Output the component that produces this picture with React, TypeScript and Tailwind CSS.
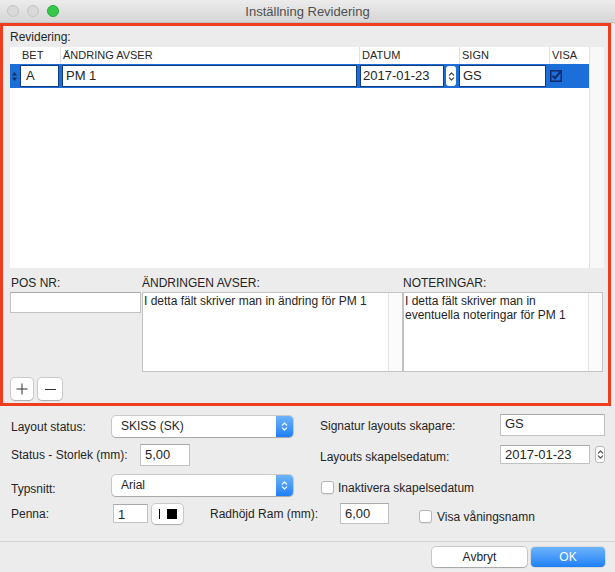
import type { ReactNode } from "react";

function Chevrons({ color, className }: { color: string; className?: string }) {
  return (
    <svg viewBox="0 0 8 14" className={className} fill="none" stroke={color} strokeWidth="1.4" strokeLinecap="round" strokeLinejoin="round">
      <path d="M1.5 5.5L4 3L6.5 5.5" />
      <path d="M1.5 8.5L4 11L6.5 8.5" />
    </svg>
  );
}

function Stepper({ className }: { className: string }) {
  return (
    <div className={`flex items-center justify-center rounded-[3px] border border-[#b9b9b9] bg-white ${className}`}>
      <Chevrons color="#555" className="h-[13px] w-[7px]" />
    </div>
  );
}

function Select({ value }: { value: string }) {
  return (
    <div className="flex h-[21px] w-[181px] overflow-hidden rounded-[4px] bg-white shadow-[0_0_0_1px_rgba(0,0,0,0.14),0_1px_1px_rgba(0,0,0,0.18)]">
      <span className="flex-1 pl-[9px] leading-[21px]">{value}</span>
      <span className="flex w-[17px] items-center justify-center bg-gradient-to-b from-[#6db3fa] to-[#1d7ff6]">
        <Chevrons color="#fff" className="h-[13px] w-[7px]" />
      </span>
    </div>
  );
}

function Field({ value, className }: { value?: string; className: string }) {
  return (
    <div className={`border border-[#c2c2c2] border-t-[#aaaaaa] bg-white pl-[4px] text-[13px] ${className}`}>{value}</div>
  );
}

function Checkbox() {
  return <span className="h-[13px] w-[13px] shrink-0 rounded-[3px] border border-[#b5b5b5] bg-white shadow-[0_1px_0_rgba(0,0,0,0.06)]" />;
}

function SmallButton({ children, w }: { children: ReactNode; w: string }) {
  return (
    <div className={`flex h-[22px] items-center justify-center rounded-[4px] bg-white shadow-[0_0_0_1px_rgba(0,0,0,0.14),0_1px_1px_rgba(0,0,0,0.15)] ${w}`}>
      {children}
    </div>
  );
}

function TitleBar() {
  return (
    <div className="relative flex h-[23px] shrink-0 items-center justify-center border-b border-[#c2c2c2] bg-gradient-to-b from-[#ececec] to-[#d6d6d6]">
      <div className="absolute left-[7px] top-[5px] flex gap-[8px]">
        <span className="h-[12px] w-[12px] rounded-full border border-[#c4c4c4] bg-[#d9d9d9]" />
        <span className="h-[12px] w-[12px] rounded-full border border-[#c4c4c4] bg-[#d9d9d9]" />
        <span className="h-[12px] w-[12px] rounded-full border border-[#27a93a] bg-[#35c94b]" />
      </div>
      <span className="pt-[1px] text-[13px] text-[#4f4f4f]">Inställning Revidering</span>
    </div>
  );
}

function RevisionTable() {
  const head = "border-l border-[#e1e1e1] pl-[2px]";
  return (
    <div className="ml-[7px] mt-[3px] flex w-[594px] flex-col bg-white">
      <div className="flex h-[17px] text-[11px] leading-[17px] text-[#262626]">
        <span className="w-[9px]" />
        <span className="w-[41px] pl-[3px]">BET</span>
        <span className={`w-[299px] ${head}`}>ÄNDRING AVSER</span>
        <span className={`w-[100px] ${head}`}>DATUM</span>
        <span className={`w-[90px] ${head}`}>SIGN</span>
        <span className={`w-[40px] ${head}`}>VISA</span>
        <span className="w-[15px] border-l border-[#e1e1e1] bg-[#f8f8f8]" />
      </div>
      <div className="flex h-[24px] text-[13px]">
        <div className="flex w-[579px] items-center bg-[#1c6ed9]">
          <span className="flex w-[9px] justify-center">
            <svg viewBox="0 0 5 9" className="h-[9px] w-[5px]" fill="#0e2c5e">
              <path d="M2.5 0L5 3.5H0Z" />
              <path d="M2.5 9L5 5.5H0Z" />
            </svg>
          </span>
          <div className="ml-[1px] h-[22px] w-[39px] border border-[#123c80] bg-white pl-[5px] leading-[20px]">A</div>
          <div className="ml-[3px] h-[22px] w-[295px] border border-[#123c80] bg-white pl-[3px] leading-[20px]">PM 1</div>
          <div className="ml-[3px] h-[22px] w-[84px] border border-[#123c80] bg-white pl-[2px] leading-[20px]">2017-01-23</div>
          <div className="ml-[2px] flex h-[20px] w-[10px] items-center justify-center rounded-[3px] bg-white">
            <Chevrons color="#444" className="h-[13px] w-[7px]" />
          </div>
          <div className="ml-[3px] h-[22px] w-[87px] border border-[#123c80] bg-white pl-[3px] leading-[20px]">GS</div>
          <span className="ml-[4px] flex">
            <svg viewBox="0 0 12 12" className="h-[12px] w-[12px]" fill="none" stroke="#0b2a66">
              <rect x="0.75" y="0.75" width="10.5" height="10.5" strokeWidth="1.5" />
              <path d="M2.6 5.8L5 8.3L10.5 1.6" strokeWidth="2" />
            </svg>
          </span>
        </div>
        <span className="w-[15px] border-l border-[#e1e1e1] bg-[#f8f8f8]" />
      </div>
      <div className="flex h-[180px] justify-end">
        <span className="w-[15px] border-l border-[#e1e1e1] bg-[#f8f8f8]" />
      </div>
    </div>
  );
}

function NotesArea({ text, className }: { text: ReactNode; className: string }) {
  return (
    <div className={`flex h-[80px] border border-[#c2c2c2] bg-white ${className}`}>
      <p className="flex-1 pl-[1px] pt-[1px] leading-[14px]">{text}</p>
      <span className="w-[14px] border-l border-[#e4e4e4] bg-[#fbfbfb]" />
    </div>
  );
}

export default function App() {
  return (
    <div className="flex h-[572px] w-[615px] flex-col overflow-hidden bg-[#ececec] font-['Liberation_Sans',Arial,sans-serif] text-[12px] text-[#252525]">
      <TitleBar />

      <section className="flex h-[383px] w-[611px] shrink-0 flex-col border-[3px] border-[#ee3d1f]">
        <div className="ml-[7px] mt-[4px] h-[14px] leading-[14px]">Revidering:</div>
        <RevisionTable />

        <div className="ml-[7px] mt-[8px] flex">
          <div className="flex w-[132px] flex-col">
            <span className="h-[14px] pl-[1px] leading-[14px]">POS NR:</span>
            <Field className="mt-[2px] h-[21px] w-[131px]" />
          </div>
          <div className="flex w-[261px] flex-col">
            <span className="h-[14px] leading-[14px]">ÄNDRINGEN AVSER:</span>
            <NotesArea className="mt-[2px] w-[261px]" text="I detta fält skriver man in ändring för PM 1" />
          </div>
          <div className="flex w-[200px] flex-col">
            <span className="h-[14px] leading-[14px]">NOTERINGAR:</span>
            <NotesArea
              className="mt-[2px] w-[200px]"
              text={
                <>
                  I detta fält skriver man in
                  <br />
                  eventuella noteringar för PM 1
                </>
              }
            />
          </div>
        </div>

        <div className="ml-[8px] mt-[6px] flex gap-[5px]">
          <SmallButton w="w-[22px]">
            <svg viewBox="0 0 12 12" className="h-[12px] w-[12px]" stroke="#333" strokeWidth="1">
              <path d="M6 0.5V11.5M0.5 6H11.5" />
            </svg>
          </SmallButton>
          <SmallButton w="w-[24px]">
            <span className="h-[1px] w-[11px] bg-[#333]" />
          </SmallButton>
        </div>
      </section>

      <div className="flex pl-[11px]">
        <div className="w-[309px] pt-[10px]">
          <div className="flex h-[21px] items-center">
            <span className="w-[101px]">Layout status:</span>
            <Select value="SKISS (SK)" />
          </div>
          <div className="mt-[7px] flex h-[22px] items-center">
            <span className="w-[129px]">Status - Storlek (mm):</span>
            <Field value="5,00" className="h-[22px] w-[50px] leading-[20px]" />
          </div>
          <div className="mt-[9px] flex h-[21px] items-center">
            <span className="w-[101px] pt-[6px]">Typsnitt:</span>
            <Select value="Arial" />
          </div>
        </div>
        <div className="pt-[8px]">
          <div className="flex h-[22px] items-center">
            <span className="w-[180px] pt-[2px]">Signatur layouts skapare:</span>
            <Field value="GS" className="h-[22px] w-[105px] leading-[18px]" />
          </div>
          <div className="mt-[9px] flex h-[19px] items-center">
            <span className="w-[180px] pt-[5px]">Layouts skapelsedatum:</span>
            <Field value="2017-01-23" className="h-[19px] w-[90px] leading-[17px]" />
            <Stepper className="ml-[5px] h-[17px] w-[10px]" />
          </div>
          <div className="ml-[1px] mt-[17px] flex h-[13px] items-center gap-[4px]">
            <Checkbox />
            <span>Inaktivera skapelsedatum</span>
          </div>
        </div>
      </div>

      <div className="mt-[7px] flex h-[21px] items-center pl-[11px]">
        <span className="w-[102px]">Penna:</span>
        <Field value="1" className="h-[19px] w-[35px] leading-[19px]" />
        <div className="ml-[4px] flex h-[20px] w-[31px] items-center gap-[7px] rounded-[4px] bg-white pl-[7px] shadow-[0_0_0_1px_rgba(0,0,0,0.14),0_1px_1px_rgba(0,0,0,0.15)]">
          <span className="h-[10px] w-[1px] bg-black" />
          <span className="h-[10px] w-[10px] bg-black" />
        </div>
        <span className="ml-[27px] w-[130px]">Radhöjd Ram (mm):</span>
        <Field value="6,00" className="h-[21px] w-[49px] leading-[19px]" />
        <div className="ml-[30px] flex items-center gap-[5px] pt-[6px]">
          <Checkbox />
          <span>Visa våningsnamn</span>
        </div>
      </div>

      <div className="mt-[17px] border-t border-[#d3d3d3]" />

      <div className="mt-[5px] flex justify-end gap-[4px] pr-[10px]">
        <div className="flex h-[20px] w-[95px] items-center justify-center rounded-[4px] bg-white shadow-[0_0_0_1px_rgba(0,0,0,0.14),0_1px_1px_rgba(0,0,0,0.18)]">
          Avbryt
        </div>
        <div className="flex h-[20px] w-[74px] items-center justify-center rounded-[4px] bg-gradient-to-b from-[#6cb3fa] to-[#1b80f7] text-white shadow-[0_0_0_1px_rgba(0,0,0,0.08)]">
          OK
        </div>
      </div>
    </div>
  );
}
